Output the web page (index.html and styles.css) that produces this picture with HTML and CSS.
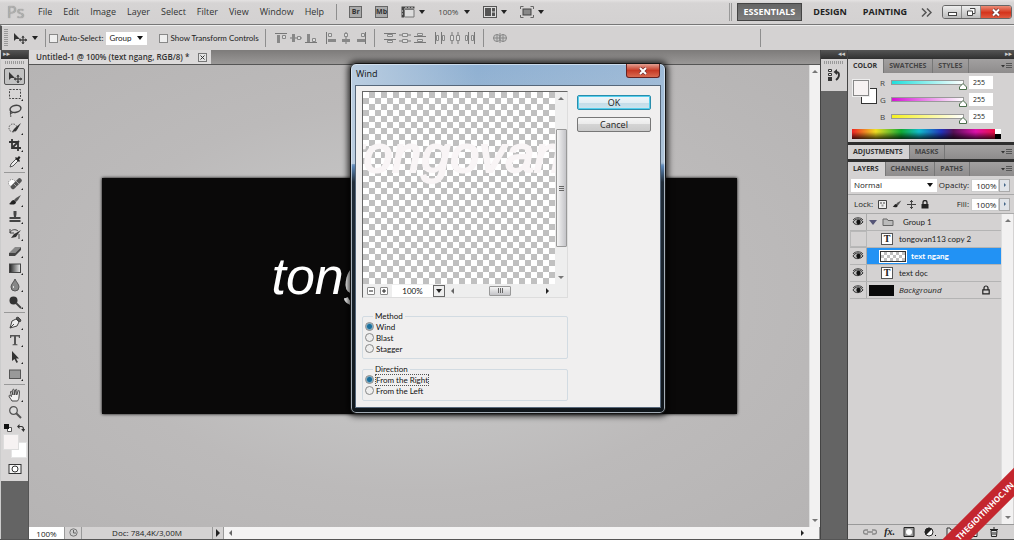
FILE: index.html
```html
<!DOCTYPE html>
<html lang="en">
<head>
<meta charset="utf-8">
<title>Untitled-1 @ 100%</title>
<link rel="stylesheet" href="styles.css">
</head>
<body>
<svg class="defs" aria-hidden="true">
  <symbol id="i-move" viewBox="0 0 16 12"><path d="M2 1v8l2-2h4z" fill="#333"/><path d="M11 4v8M7 8h8" stroke="#444" stroke-width="1.300"/><path d="M9.300 5.800 11 3.600l1.700 2.200zM9.300 10.200 11 12.300l1.700-2.100zM9 6.300 6.800 8 9 9.700zM13 6.300 15.200 8 13 9.700z" fill="#444"/></symbol>
  <symbol id="i-marquee" viewBox="0 0 14 14"><rect x="1.500" y="2.500" width="11" height="9" fill="none" stroke="#444" stroke-dasharray="2 1.300"/></symbol>
  <symbol id="i-lasso" viewBox="0 0 14 14"><ellipse cx="7.500" cy="5" rx="5.500" ry="3.500" fill="none" stroke="#444" stroke-width="1.500" transform="rotate(-12 7 5)"/><path d="M3 7c-2 2 1 3 1.500 2S3 7 2.500 9s1 3 0 4" fill="none" stroke="#444"/></symbol>
  <symbol id="i-quick" viewBox="0 0 14 14"><circle cx="5" cy="7" r="4" fill="none" stroke="#555" stroke-dasharray="1.500 1.200"/><path d="M13 2 8 6 6 8l-2 3 4-1 1.500-2z" fill="#333"/></symbol>
  <symbol id="i-crop" viewBox="0 0 14 14"><path d="M4 1v9h9M1 4h9v9M4 10l7-7" fill="none" stroke="#333" stroke-width="1.800"/></symbol>
  <symbol id="i-dropper" viewBox="0 0 14 14"><path d="m2 12 1-3 5-5 2 2-5 5z" fill="#eee" stroke="#555"/><path d="m7 3 4 4 1-1-1-1.500 1.500-2L11 1 9 3 8 2z" fill="#222"/></symbol>
  <symbol id="i-heal" viewBox="0 0 14 14"><circle cx="4" cy="7" r="3.500" fill="#fff" stroke="#777" stroke-dasharray="1 1"/><path d="m5 11 6.500-6.500" stroke="#555" stroke-width="4.500" stroke-linecap="round"/><path d="m5.500 7.500 3 3M8 5l3 3" stroke="#bbb" stroke-width=".8"/></symbol>
  <symbol id="i-brush" viewBox="0 0 14 14"><path d="m13 2-5 3-2 2 2 2 2-2z" fill="#555"/><path d="M6 7c-3 0-3 3-5 4 3 1 7 1 7-2z" fill="#222"/></symbol>
  <symbol id="i-stamp" viewBox="0 0 14 14"><path d="M5.500 1h3v3l-.5 3h4.500v2h-11V7H6l-.5-3zM1.500 10h11v2h-11z" fill="#444"/></symbol>
  <symbol id="i-history" viewBox="0 0 14 14"><path d="m13 3-5 3-2 1-3 4 5-1 2-3z" fill="#333"/><path d="M2 6c1-4 6-4 8-2M2 2v4h4M11 7v5" fill="none" stroke="#444"/></symbol>
  <symbol id="i-eraser" viewBox="0 0 14 14"><path d="m1 9 6-6h6l-6 6z" fill="#888"/><path d="M1 9h6v3H1zM7 9l6-6v3l-6 6z" fill="#444"/></symbol>
  <symbol id="i-gradient" viewBox="0 0 14 14"><linearGradient id="g1"><stop stop-color="#222"/><stop offset="1" stop-color="#eee"/></linearGradient><rect x="1.500" y="3" width="11" height="8.500" fill="url(#g1)" stroke="#444"/></symbol>
  <symbol id="i-drop" viewBox="0 0 14 14"><path d="M7 1c1 3 4 5 4 8a4 4 0 0 1-8 0c0-3 3-5 4-8z" fill="#888" stroke="#555"/><path d="M5.500 8v2" stroke="#ddd"/></symbol>
  <symbol id="i-dodge" viewBox="0 0 14 14"><circle cx="5.500" cy="5.500" r="4" fill="#333"/><path d="m8 8 5 5" stroke="#444" stroke-width="1.800"/></symbol>
  <symbol id="i-pen" viewBox="0 0 14 14"><path d="m2 12 2-7 4-2 3 3-2 4z" fill="#eee" stroke="#444"/><path d="m2 12 4-4M8 2l2-1 3 3-1 2z" stroke="#444" fill="#555"/></symbol>
  <symbol id="i-type" viewBox="0 0 14 14"><path d="M2 2h10v3h-1l-.5-1.500H8V11l1.500.5v.8h-5v-.8L6 11V3.500H3.500L3 5H2z" fill="#555"/></symbol>
  <symbol id="i-arrow" viewBox="0 0 14 14"><path d="M4 1v10l2.500-2 2 4 1.500-1-2-3.500h3z" fill="#333"/></symbol>
  <symbol id="i-shape" viewBox="0 0 14 14"><rect x="1.500" y="3" width="11" height="8.500" fill="#999" stroke="#555"/></symbol>
  <symbol id="i-hand" viewBox="0 0 14 14"><path d="M4 13C3 11 1 9 1 8s1-1 2.500.5L2.500 4c0-1 1.200-1 1.500 0l1 3-.3-5c0-1 1.300-1 1.500 0L6.700 7 7.500 2c.2-1 1.400-.8 1.400.2L8.700 7l1.500-4c.3-1 1.400-.6 1.300.4L11 9c0 2-1 3-1.500 4z" fill="#f2f2f2" stroke="#444"/></symbol>
  <symbol id="i-zoom" viewBox="0 0 14 14"><circle cx="5.500" cy="5.500" r="3.800" fill="#ddd" stroke="#555" stroke-width="1.300"/><path d="m8 8 5 5" stroke="#555" stroke-width="2"/></symbol>
  <symbol id="i-mask" viewBox="0 0 14 14"><rect x="1" y="2.500" width="12" height="9" fill="#f4f4f4" stroke="#333"/><circle cx="7" cy="7" r="3" fill="#fff" stroke="#333"/></symbol>
  <symbol id="i-swap" viewBox="0 0 8 8"><path d="M1 2.500h3.500q2 0 2 3" fill="none" stroke="#333" stroke-width="1.200"/><path d="M0 2.500 2.500 0v5zM4.200 5h4L6.500 8z" fill="#333"/></symbol>
  <symbol id="i-atop" viewBox="0 0 12 12"><path d="M0 1.500h12" stroke="#777"/><path d="M2 3h3v8H2z" fill="#888"/><path d="M7.500 3.500h3v3h-3z" fill="#ddd" stroke="#888"/></symbol>
  <symbol id="i-amid" viewBox="0 0 12 12"><path d="M0 6h12" stroke="#777"/><path d="M2 2h3v8H2z" fill="#888"/><path d="M7.500 4.500h3v3h-3z" fill="#ddd" stroke="#888"/></symbol>
  <symbol id="i-abot" viewBox="0 0 12 12"><path d="M0 10.500h12" stroke="#777"/><path d="M2 2h3v8H2z" fill="#888"/><path d="M7.500 6.500h3v3h-3z" fill="#ddd" stroke="#888"/></symbol>
  <symbol id="i-dtop" viewBox="0 0 12 12"><path d="M0 1.500h12M0 7.500h12" stroke="#777"/><path d="M3.500 2.500h5v2h-5zM3.500 8.500h5v2h-5z" fill="#ddd" stroke="#888"/></symbol>
  <symbol id="i-dmid" viewBox="0 0 12 12"><path d="M0 3h12M0 9h12" stroke="#777"/><path d="M3.500 1.500h5v3h-5zM3.500 7.500h5v3h-5z" fill="#ddd" stroke="#888"/></symbol>
  <symbol id="i-dbot" viewBox="0 0 12 12"><path d="M0 4.500h12M0 10.500h12" stroke="#777"/><path d="M3.500 1.500h5v2h-5zM3.500 7.500h5v2h-5z" fill="#ddd" stroke="#888"/></symbol>
  <symbol id="i-sphere" viewBox="0 0 14 12"><circle cx="4" cy="6" r="3.500" fill="#ccc" stroke="#888"/><circle cx="10" cy="6" r="3.500" fill="#ccc" stroke="#888"/><path d="M7 1v10M0 6h14M4 2v8M10 2v8" stroke="#888"/></symbol>
  <symbol id="i-eye" viewBox="0 0 12 10"><path d="M1 5c2-4 8-4 10 0-2 3-8 4-10 0z" fill="#bbb" stroke="#333"/><circle cx="6.500" cy="5" r="2.200" fill="#111"/><path d="M1 3c2-3 8-3 10 0" fill="none" stroke="#444"/></symbol>
  <symbol id="i-lock" viewBox="0 0 8 10"><path d="M2 5V3a2 2 0 0 1 4 0v2" fill="none" stroke="#222" stroke-width="1.200"/><path d="M.8 4.800h6.400v4H.8z" fill="none" stroke="#222" stroke-width="1.200"/></symbol>
  <symbol id="i-menu" viewBox="0 0 12 8"><path d="M0 3h4L2 5.500z" fill="#333"/><path d="M5 1.500h6M5 3.500h6M5 5.500h6" stroke="#555"/></symbol>
  <symbol id="i-folder" viewBox="0 0 12 10"><path d="M1 8.500V2h4l1 1.500h5v5z" fill="#bbb" stroke="#666"/></symbol>
</svg>

<div class="app">
  <header class="menubar">
    <span class="logo">Ps</span>
    <nav class="menus">
      <button>File</button><button>Edit</button><button>Image</button><button>Layer</button><button>Select</button><button>Filter</button><button>View</button><button>Window</button><button>Help</button>
    </nav>
    <span class="rule"></span>
    <div class="appbar">
      <button class="badge">Br</button>
      <button class="badge">Mb</button>
      <button class="drop" aria-label="View extras"><svg width="14" height="12" viewBox="0 0 14 12"><path d="M.5.500h13v2H3v9H.5z" fill="#444"/><path d="M3.500 3.500h9.500v7.500H3.500z" fill="#ddd" stroke="#777"/><path d="M5 1v1M8 1v1M11 1v1M1 5h1M1 8h1" stroke="#eee"/></svg><i class="tri"></i></button>
      <button class="drop level">100%<i class="tri"></i></button>
      <button class="drop" aria-label="Arrange documents"><svg width="14" height="12" viewBox="0 0 14 12"><rect x=".5" y=".5" width="13" height="11" fill="#ddd" stroke="#555"/><path d="M2 2h6v8H2zM9 2h3v3.500H9zM9 6.500h3V10H9z" fill="#555"/></svg><i class="tri"></i></button>
      <button class="drop" aria-label="Screen mode"><svg width="14" height="12" viewBox="0 0 14 12"><rect x="3" y="3" width="8" height="6" fill="#888" stroke="#444"/><path d="M.5 3V.5h3M10.500.500h3V3M13.500 9v2.500h-3M3.500 11.500h-3V9" fill="none" stroke="#666"/></svg><i class="tri"></i></button>
    </div>
    <div class="workspaces">
      <button class="ws on">ESSENTIALS</button><button class="ws">DESIGN</button><button class="ws">PAINTING</button>
      <button class="more" aria-label="More workspaces"><svg width="11" height="9" viewBox="0 0 11 9"><path d="m1 .5 4 4-4 4M6 .5l4 4-4 4" fill="none" stroke="#555" stroke-width="1.500"/></svg></button>
    </div>
    <div class="winctl">
      <button aria-label="Minimize"><svg width="11" height="9"><rect x="1.500" y="4.500" width="8" height="3" fill="#fff" stroke="#444"/></svg></button>
      <button aria-label="Restore"><svg width="11" height="10"><path d="M4 1.500h5v5H7M1.500 4h5v4.500h-5z" fill="#fff" stroke="#444"/></svg></button>
      <button class="close" aria-label="Close"><svg width="10" height="9"><path d="m2 1.500 6 6M8 1.500l-6 6" stroke="#633" stroke-width="3.500"/><path d="m2 1.500 6 6M8 1.500l-6 6" stroke="#fff" stroke-width="2"/></svg></button>
    </div>
  </header>

  <div class="options">
    <span class="grip-v"></span>
    <button class="tool-now" aria-label="Move tool"><svg width="16" height="12"><use href="#i-move"/></svg><i class="tri"></i></button>
    <span class="rule"></span>
    <div class="opts">
      <label><input type="checkbox">Auto-Select:</label>
      <span class="pick pick-group"><select aria-label="Auto-select target"><option>Group</option></select></span>
      <label class="transform"><input type="checkbox">Show Transform Controls</label>
    </div>
    <span class="rule"></span>
    <div class="aligns">
      <svg><use href="#i-atop"/></svg><svg><use href="#i-amid"/></svg><svg><use href="#i-abot"/></svg>
    </div>
    <div class="aligns">
      <svg class="turn"><use href="#i-atop"/></svg><svg class="turn"><use href="#i-amid"/></svg><svg class="turn"><use href="#i-abot"/></svg>
    </div>
    <span class="rule"></span>
    <div class="aligns">
      <svg><use href="#i-dtop"/></svg><svg><use href="#i-dmid"/></svg><svg><use href="#i-dbot"/></svg>
    </div>
    <div class="aligns">
      <svg class="turn"><use href="#i-dtop"/></svg><svg class="turn"><use href="#i-dmid"/></svg><svg class="turn"><use href="#i-dbot"/></svg>
    </div>
    <span class="rule"></span>
    <div class="aligns"><svg class="wide"><use href="#i-sphere"/></svg></div>
    <span class="rule rule-end"></span>
  </div>

  <main class="desk">
    <aside class="toolcol">
      <div class="dockhead">▸▸</div>
      <div class="tools">
        <span class="grip-h"></span>
        <button class="t on" aria-label="Move"><svg><use href="#i-move"/></svg></button>
        <button class="t c" aria-label="Marquee"><svg><use href="#i-marquee"/></svg></button>
        <button class="t c" aria-label="Lasso"><svg><use href="#i-lasso"/></svg></button>
        <button class="t c" aria-label="Quick selection"><svg><use href="#i-quick"/></svg></button>
        <button class="t c" aria-label="Crop"><svg><use href="#i-crop"/></svg></button>
        <button class="t c" aria-label="Eyedropper"><svg><use href="#i-dropper"/></svg></button>
        <hr>
        <button class="t c" aria-label="Healing brush"><svg><use href="#i-heal"/></svg></button>
        <button class="t c" aria-label="Brush"><svg><use href="#i-brush"/></svg></button>
        <button class="t c" aria-label="Clone stamp"><svg><use href="#i-stamp"/></svg></button>
        <button class="t c" aria-label="History brush"><svg><use href="#i-history"/></svg></button>
        <button class="t c" aria-label="Eraser"><svg><use href="#i-eraser"/></svg></button>
        <button class="t c" aria-label="Gradient"><svg><use href="#i-gradient"/></svg></button>
        <button class="t c" aria-label="Blur"><svg><use href="#i-drop"/></svg></button>
        <button class="t c" aria-label="Dodge"><svg><use href="#i-dodge"/></svg></button>
        <hr>
        <button class="t c" aria-label="Pen"><svg><use href="#i-pen"/></svg></button>
        <button class="t c" aria-label="Type"><svg><use href="#i-type"/></svg></button>
        <button class="t c" aria-label="Path selection"><svg><use href="#i-arrow"/></svg></button>
        <button class="t c" aria-label="Rectangle"><svg><use href="#i-shape"/></svg></button>
        <hr>
        <button class="t c" aria-label="Hand"><svg><use href="#i-hand"/></svg></button>
        <button class="t" aria-label="Zoom"><svg><use href="#i-zoom"/></svg></button>
        <div class="mini"><svg viewBox="0 0 8 8"><path d="M3.500 3.500h4v4h-4z" fill="#fff" stroke="#555"/><path d="M0 0h5v5H0z" fill="#111"/></svg><svg><use href="#i-swap"/></svg></div>
        <div class="swatches"><span></span><span></span></div>
        <button class="t" aria-label="Quick mask"><svg><use href="#i-mask"/></svg></button>
      </div>
    </aside>

    <section class="doc">
      <div class="tabs"><div class="tab">Untitled-1 @ 100% (text ngang, RGB/8) *<button aria-label="Close document"><svg width="9" height="9"><rect x=".5" y=".5" width="8" height="8" fill="#e4e4e4" stroke="#777"/><path d="m2.500 2.500 4 4M6.500 2.500l-4 4" stroke="#333"/></svg></button></div></div>
      <div class="view">
        <div class="canvas"><div class="art">tongovan113</div></div>
        <div class="vbar"><i class="up"></i><i class="down"></i></div>
      </div>
      <footer class="status">
        <input class="pct" value="100%" aria-label="Zoom level">
        <span class="clock"><svg width="9" height="9"><circle cx="4.500" cy="4.500" r="3.700" fill="#ccc" stroke="#777"/><path d="M4.500 2v3H7" fill="none" stroke="#666"/></svg></span>
        <span class="size">Doc: 784,4K/3,00M</span>
        <button class="play" aria-label="Status options"><i class="right"></i></button>
        <div class="hbar"><i class="left"></i><i class="right"></i></div>
      </footer>
    </section>

    <aside class="dock">
      <div class="dockhead end">◂◂</div>
      <div class="dockbox"><span class="grip-h"></span>
        <svg width="14" height="14" viewBox="0 0 14 14"><path d="M1.500 1.500h3v2h-3zM1.500 5.500h3v2h-3z" fill="#eee" stroke="#333"/><path d="M1 9h4v4H1z" fill="#333"/><path d="M9 4c4 0 4 5 0 8" fill="none" stroke="#333" stroke-width="1.800"/><path d="M6.500 4 10 1v6z" fill="#333"/></svg>
      </div>
    </aside>

    <aside class="panels">
      <div class="dockhead end">▸▸</div>
      <section>
        <div class="ptabs"><button class="on">COLOR</button><button>SWATCHES</button><button>STYLES</button><svg><use href="#i-menu"/></svg></div>
        <div class="color">
          <div class="duo"><span></span><span></span></div>
          <div class="sliders">
            <label class="sl r"><span>R</span><span class="track"><svg viewBox="0 0 8 7"><path d="m4 .5 3.500 3.500v2.500h-7V4z" fill="#fff" stroke="#4c6e4c"/></svg></span><input value="255"></label>
            <label class="sl g"><span>G</span><span class="track"><svg viewBox="0 0 8 7"><path d="m4 .5 3.500 3.500v2.500h-7V4z" fill="#fff" stroke="#4c6e4c"/></svg></span><input value="255"></label>
            <label class="sl b"><span>B</span><span class="track"><svg viewBox="0 0 8 7"><path d="m4 .5 3.500 3.500v2.500h-7V4z" fill="#fff" stroke="#4c6e4c"/></svg></span><input value="255"></label>
          </div>
          <div class="ramp"><span></span></div>
        </div>
      </section>
      <section>
        <div class="ptabs"><button class="on">ADJUSTMENTS</button><button>MASKS</button><svg><use href="#i-menu"/></svg></div>
      </section>
      <section class="layers">
        <div class="ptabs"><button class="on">LAYERS</button><button>CHANNELS</button><button>PATHS</button><svg><use href="#i-menu"/></svg></div>
        <div class="lrow blend">
          <span class="pick"><select aria-label="Blend mode"><option>Normal</option></select></span>
          <label>Opacity:<input value="100%"></label><button class="step" aria-label="Opacity slider"><i class="right"></i></button>
        </div>
        <div class="lrow locks">
          <span>Lock:</span>
          <svg width="9" height="9"><path d="M.5.500h8v8h-8z" fill="#eee" stroke="#444"/><path d="M2 2h2v2H2zM5 2h2v2H5zM3.500 4.500h2v2h-2z" fill="#999"/></svg>
          <svg width="10" height="10" viewBox="0 0 14 14"><use href="#i-brush"/></svg>
          <svg width="9" height="9"><path d="M4.500 0v9M0 4.500h9M3 2l1.500-1.500L6 2M3 7l1.500 1.500L6 7" fill="none" stroke="#444"/></svg>
          <svg width="8" height="9" viewBox="0 0 8 9"><path d="M2 4V2.500a2 2 0 0 1 4 0V4" fill="none" stroke="#222" stroke-width="1.300"/><path d="M.5 4h7v4.500h-7z" fill="#222"/></svg>
          <label class="fill">Fill:<input value="100%"></label><button class="step" aria-label="Fill slider"><i class="right"></i></button>
        </div>
        <div class="stack">
          <ul>
            <li><span class="eye"><svg><use href="#i-eye"/></svg></span><i class="fold"></i><svg class="folder"><use href="#i-folder"/></svg><span class="name">Group 1</span></li>
            <li><span class="eye off"></span><b class="tt">T</b><span class="name">tongovan113 copy 2</span></li>
            <li class="sel"><span class="eye"><svg><use href="#i-eye"/></svg></span><i class="thumb check"></i><span class="name">text ngang</span></li>
            <li><span class="eye"><svg><use href="#i-eye"/></svg></span><b class="tt">T</b><span class="name">text dọc</span></li>
            <li class="bg"><span class="eye"><svg><use href="#i-eye"/></svg></span><i class="thumb black"></i><span class="name">Background</span><svg class="lock"><use href="#i-lock"/></svg></li>
          </ul>
          <div class="vbar"><i class="up"></i><i class="down"></i></div>
        </div>
        <div class="lfoot">
          <svg viewBox="0 0 14 10"><path d="M5 3H2.500a2 2 0 0 0 0 4H5M9 3h2.500a2 2 0 0 1 0 4H9M4 5h6" fill="none" stroke="#888" stroke-width="1.300"/></svg>
          <em>fx.</em>
          <svg viewBox="0 0 14 10"><path d="M2 .5h10v9H2z" fill="#999" stroke="#222"/><circle cx="7" cy="5" r="3" fill="#fff"/></svg>
          <svg viewBox="0 0 14 10"><circle cx="6" cy="5" r="4" fill="#fff" stroke="#222"/><path d="M3 8a4 4 0 0 1 6-6z" fill="#222"/><path d="M12 8h1v1h-1z"/></svg>
          <svg viewBox="0 0 14 10"><path d="M2 9V1h3l1 2h6v6z" fill="#ddd" stroke="#333"/></svg>
          <svg viewBox="0 0 14 10"><path d="M3 .5h8v9H3z" fill="#fff" stroke="#222"/><path d="M3 6h4v4" fill="none" stroke="#222"/></svg>
          <svg viewBox="0 0 14 10"><path d="M4 3.500h6L9.500 9.500h-5zM3 2.500h8M6 1h2M6 5v3M8 5v3" fill="#ddd" stroke="#222"/></svg>
        </div>
      </section>
    </aside>
  </main>

  <div class="dialog" role="dialog" aria-labelledby="dlg-title">
    <div class="dlg-title"><span id="dlg-title">Wind</span><button aria-label="Close dialog"><svg width="10" height="8"><path d="m2 1 6 6M8 1 2 7" stroke="#733" stroke-width="3.500"/><path d="m2 1 6 6M8 1 2 7" stroke="#fff" stroke-width="2"/></svg></button></div>
    <div class="dlg-body">
      <div class="dlg-left">
        <div class="preview">
          <div class="shot check"><span>tongovan113</span></div>
          <div class="pv"><i class="up"></i><span class="knob"></span><i class="down"></i></div>
          <div class="ph">
            <button class="pm" aria-label="Zoom out"><svg width="6" height="6"><path d="M1 3h4" stroke="#222"/></svg></button><button class="pm" aria-label="Zoom in"><svg width="6" height="6"><path d="M1 3h4M3 1v4" stroke="#222"/></svg></button>
            <input value="100%" aria-label="Preview zoom"><button class="pd" aria-label="Zoom presets"><i class="tri"></i></button>
            <i class="left"></i><span class="knob"></span><i class="right"></i>
          </div>
        </div>
        <fieldset>
          <legend>Method</legend>
          <label><input type="radio" name="method" checked><span>Wind</span></label>
          <label><input type="radio" name="method"><span>Blast</span></label>
          <label><input type="radio" name="method"><span>Stagger</span></label>
        </fieldset>
        <fieldset>
          <legend>Direction</legend>
          <label><input type="radio" name="dir" checked><span class="focus">From the Right</span></label>
          <label><input type="radio" name="dir"><span>From the Left</span></label>
        </fieldset>
      </div>
      <div class="dlg-actions"><button class="ok">OK</button><button>Cancel</button></div>
    </div>
  </div>

  <div class="corner"><a href="#">THEGIOITINHOC.VN</a></div>
</div>
</body>
</html>
```
FILE: styles.css
```css
* { box-sizing: border-box; }
body { margin: 0; font: 9px/12px "Open Sans", "Noto Sans", sans-serif; color: #222; background: #d4d2d2; }
button { border: 0; padding: 0; margin: 0; background: none; font: inherit; color: inherit; display: flex; align-items: center; justify-content: center; }
input, select { font: inherit; color: inherit; margin: 0; border: 0; padding: 0; border-radius: 0; min-width: 0; }
svg { display: block; flex: none; }
.defs { position: absolute; width: 0; height: 0; }
.app { position: relative; display: flex; flex-direction: column; height: 100vh; min-height: 540px; overflow: hidden; }

/* triangles */
.tri, .up, .down, .left, .right { display: block; width: 0; height: 0; border: 3px solid transparent; }
.tri { border-width: 4px 3px 0; border-top-color: #222; }
.up { border-width: 0 3px 3px; border-bottom-color: #777; }
.down { border-width: 3px 3px 0; border-top-color: #777; }
.left { border-width: 3px 3px 3px 0; border-right-color: #666; }
.right { border-width: 3px 0 3px 3px; border-left-color: #222; }

/* menu bar */
.menubar { flex: none; height: 25px; display: flex; align-items: center; padding: 0 2px 0 7px; background: linear-gradient(#e4e2e2 0, #d6d4d4 3px, #d3d1d1); border-bottom: 1px solid #777; }
.logo { width: 31px; font-size: 16px; line-height: 20px; color: #b0b0b0; text-shadow: 0 0 1px #777; }
.menus { display: flex; gap: 11px; color: #333; }
.rule { width: 1px; align-self: stretch; margin: 3px 0; background: #8e8e8e; }
.menus + .rule { margin: 4px 12px; }
.appbar { display: flex; align-items: center; gap: 13px; color: #444; }
.badge { width: 13px; height: 12px; border: 1px solid #666; background: #aaa; font-size: 7px; font-weight: 700; color: #333; }
.drop { gap: 4px; }
.level { gap: 6px; font-size: 8px; color: #444; }
.workspaces { margin-left: auto; display: flex; align-items: center; gap: 6px; padding-left: 5px; border-left: 3px double #999; font-weight: 700; color: #222; }
.ws { height: 18px; padding: 0 5px; }
.ws.on { color: #fff; background: linear-gradient(#656565, #7e7e7e); border: 1px solid #444; padding: 0 6px; }
.more { margin-left: 3px; }
.winctl { display: flex; margin-left: 10px; border: 1px solid #666; border-radius: 3px; overflow: hidden; }
.winctl button { width: 19px; height: 12px; background: linear-gradient(#eee, #bbb); border-right: 1px solid #888; }
.winctl .close { width: 30px; background: linear-gradient(#eb8c76, #d4341c 55%, #e05a40); border: 0; }

/* options bar */
.options { flex: none; height: 25px; display: flex; align-items: center; padding: 0 4px 0 2px; background: #d4d2d2; border-top: 1px solid #eee; border-left: 2px solid #555; font: 8px/12px Lato, "Open Sans", sans-serif; }
.grip-v { width: 4px; height: 18px; background: repeating-linear-gradient(#999 0 1px, transparent 1px 2px); }
.tool-now { gap: 4px; margin: 0 7px 0 4px; }
.opts { display: flex; align-items: center; margin: 0 6px 0 3px; }
.opts label { display: flex; align-items: center; gap: 2px; white-space: nowrap; }
.opts input { appearance: none; width: 9px; height: 9px; border: 1px solid #888; background: #eee; }
.transform { margin-left: 12px; }
.pick { display: flex; align-items: center; position: relative; background: #fff; }
.pick::after { content: ""; position: absolute; right: 4px; border: 3px solid transparent; border-width: 4px 3px 0; border-top-color: #111; }
.pick select { appearance: none; width: 100%; height: 13px; padding-left: 3px; background: none; line-height: 12px; }
.pick-group { width: 41px; margin-left: 3px; }
.aligns { display: flex; gap: 3px; margin: 0 4px 0 3px; }
.aligns svg { width: 12px; height: 12px; }
.rule + .aligns { margin-left: 9px; }
.turn { transform: rotate(-90deg); }
.aligns .wide { width: 14px; }
.rule-end { margin-left: auto; margin-right: 249px; }
.aligns + .aligns { margin: 0 7px 0 4px; }

/* work area */
.desk { flex: 1; min-height: 0; display: grid; grid-template-columns: 29px 1fr 28px 166px; background: #646464; border-bottom: 1px solid #555; }
.dockhead { height: 9px; background: linear-gradient(#555, #303030); color: #ccc; font: 7px/9px "DejaVu Sans", sans-serif; padding: 0 2px; }
.dockhead.end { text-align: right; }
.toolcol { border-left: 1px solid #ccc; border-right: 1px solid #555; background: #646464; }
.tools { display: flex; flex-direction: column; align-items: center; background: #d8d6d6; padding: 2px 0 4px; }
.grip-h { width: 20px; height: 3px; margin-bottom: 4px; background: repeating-linear-gradient(90deg, #999 0 1px, transparent 1px 2px); }
.t { position: relative; width: 21px; height: 17px; }
.t svg { width: 14px; height: 14px; }
.t.on { border: 1px solid #555; border-radius: 2px; background: #c2c2c2; }
.t.on svg { width: 16px; height: 12px; }
.t.c::after { content: ""; position: absolute; right: 2px; bottom: 1px; border: 1px solid #222; border-left-color: transparent; border-top-color: transparent; }
.tools hr { width: 21px; height: 1px; margin: 2px 0 1px; border: 0; background: #999; }
.mini { display: flex; gap: 5px; margin: 4px 0 2px; }
.mini svg { width: 8px; height: 8px; }
.swatches { width: 24px; height: 24px; margin-bottom: 2px; display: grid; grid-template: repeat(3, 8px) / repeat(3, 8px); }
.swatches span { background: #fff; grid-area: 2 / 2 / 4 / 4; border: 1px solid #e4e4e4; }
.swatches span:first-child { z-index: 1; grid-area: 1 / 1 / 3 / 3; background: #f6f2f2; border: 1px solid #ddd; }

.doc { display: flex; flex-direction: column; min-width: 0; min-height: 0; }
.tabs { height: 15px; display: flex; background: linear-gradient(#7d7b7a, #9a9897); border-bottom: 1px solid #555; }
.tab { display: flex; align-items: center; gap: 9px; padding: 0 4px 0 7px; background: #dcdada; font-weight: 600; font-size: 8px; color: #333; white-space: nowrap; }
.view { flex: 1; min-height: 0; display: flex; }
.canvas { flex: 1; display: flex; align-items: center; justify-content: center; background: radial-gradient(ellipse at center, #c8c8c8 20%, #bcbaba 60%, #b6b4b4); }
.art { width: 635px; height: 236px; padding: 0 0 40px 170px; display: flex; align-items: center; background: #0a0909; box-shadow: 0 0 3px #000; color: #fff; font: italic 52px/60px "Liberation Sans", Arial, sans-serif; }
.vbar { width: 11px; display: flex; flex-direction: column; justify-content: space-between; align-items: center; padding: 5px 0; background: #f2f1f1; border-left: 1px solid #ddd; }
.status { height: 12px; display: flex; background: #d4d2d2; font-size: 8px; line-height: 11px; }
.status > * { border-right: 1px solid #999; }
.pct { width: 36px; text-align: center; background: #fff; }
.clock { width: 17px; padding: 1px 4px; }
.size { width: 131px; text-align: center; }
.play { width: 11px; }
.play .right { border-width: 4px 0 4px 4px; }
.hbar { flex: 1; display: flex; align-items: center; justify-content: space-between; padding: 0 15px 0 5px; background: #f4f3f3; }

.dock { border-left: 1px solid #444; border-right: 1px solid #444; }
.dockbox { height: 32px; padding-top: 2px; display: flex; flex-direction: column; align-items: center; background: #d4d2d2; }

/* panels */
.panels { display: flex; flex-direction: column; min-height: 0; background: #2e2e2e; }
.panels section { flex: none; margin-bottom: 3px; background: #d4d2d2; }
.ptabs { display: flex; height: 14px; background: linear-gradient(#a2a0a0, #8e8c8c); font-weight: 700; font-size: 7px; color: #444; }
.ptabs button { padding: 0 6px 0 5px; border-right: 1px solid #777; }
.ptabs .on { background: #d4d2d2; color: #333; }
.ptabs svg { width: 12px; height: 8px; margin: 3px 1px 0 auto; }
.color { display: grid; grid-template-columns: 27px 1fr; padding: 3px 21px 3px 5px; row-gap: 6px; }
.duo { margin-top: 4px; display: grid; grid-template: repeat(3, 8px) / repeat(3, 8px); }
.duo span { background: #fff; border: 1px solid #333; grid-area: 2 / 2 / 4 / 4; }
.duo span:first-child { z-index: 1; background: #f6f2f2; border-color: #888; outline: 1px solid #eee; grid-area: 1 / 1 / 3 / 3; }
.sliders { display: flex; flex-direction: column; gap: 4px; font-size: 8px; }
.sl { display: flex; align-items: center; gap: 5px; }
.sl > span:first-child { width: 6px; color: #444; }
.sl input { width: 24px; height: 13px; padding-left: 4px; background: #fff; font-size: 7px; }
.track { flex: 1; height: 5px; display: flex; justify-content: flex-end; border: 1px solid #999; background: linear-gradient(90deg, #1fdedb, #fff); }
.g .track { background: linear-gradient(90deg, #d414d4, #fff); }
.b .track { background: linear-gradient(90deg, #f5f01e, #fff); }
.track svg { width: 8px; height: 7px; margin: 2px -4px 0 0; }
.ramp { grid-column: 1 / 3; height: 10px; margin: 0 -8px 0 -1px; display: flex; justify-content: flex-end; background: linear-gradient(transparent 30%, rgba(0,0,0,.75)), linear-gradient(90deg, #e22 0, #ed2 16%, #1a3 33%, #1bc 45%, #23b 60%, #515 68%, #d1a 83%, #e12); }
.ramp span { width: 6px; background: linear-gradient(#fff 50%, #000 50%); }
.panels .layers { flex: 1; min-height: 0; margin: 0; display: flex; flex-direction: column; font-size: 8px; }
.lrow { height: 19px; display: flex; align-items: center; padding: 0 4px 0 3px; border-bottom: 1px solid #aaa; }
.blend .pick { width: 88px; margin-right: 2px; }
.lrow label { display: flex; align-items: center; gap: 2px; margin-left: auto; }
.lrow input { width: 28px; height: 13px; padding-left: 4px; background: #fff; border: 1px solid #ccc; }
.step { width: 11px; height: 13px; border: 1px solid #aaa; background: #e0e4e8; }
.step .right { border-width: 2px 0 2px 2px; border-left-color: #468; }
.locks { gap: 5px; padding-left: 6px; }
.locks .step { margin-left: -5px; }
.stack { flex: 1; min-height: 0; display: flex; }
.stack ul { flex: 1; list-style: none; margin: 0 0 0 2px; padding: 0; min-width: 0; }
.stack li { display: flex; align-items: center; height: 17px; border-bottom: 1px solid #b4b4b4; }
.eye { width: 17px; height: 100%; padding: 3px 2px; border-right: 1px solid #aaa; background: #d4d2d2; }
.eye svg { width: 12px; height: 10px; }
.eye.off { border: 1px solid #b8b8b8; }
.fold { margin: 0 5px 0 2px; border: 4px solid transparent; border-width: 5px 4px 0; border-top-color: #557; }
.folder { width: 12px; height: 10px; }
.folder + .name { margin-left: 9px; }
.tt { width: 12px; height: 12px; margin: 0 6px 0 14px; border: 1px solid #555; background: #fff; font: 700 10px/10px "Liberation Serif", serif; text-align: center; }
.name { font-family: Lato, "Open Sans", sans-serif; white-space: nowrap; }
.sel { background: #2292f4; color: #fff; font-weight: 700; }
.thumb { height: 11px; width: 25px; }
.sel .thumb { width: 26px; margin: 0 5px 0 13px; border: 1px solid #333; outline: 1px solid #fff; background-size: 6px 6px; }
.black { margin: 0 5px 0 2px; background: #0a0a0a; }
.bg { font-style: italic; }
.bg .name { font-family: "Open Sans", sans-serif; }
.lock { width: 8px; height: 10px; margin: 0 11px 0 auto; }
.layers .vbar { width: 12px; margin-right: 1px; }
.lfoot { height: 15px; display: flex; align-items: center; justify-content: space-between; padding: 0 13px 0 15px; border-top: 1px solid #999; font: 700 10px/12px "Liberation Serif", serif; }
.lfoot svg { width: 14px; height: 10px; }

/* filter dialog */
.check { background: repeating-conic-gradient(#c0c0c0 0 25%, #fff 0 50%) 0 0 / 12px 12px; }
.dialog { position: absolute; left: 350px; top: 63px; width: 316px; padding: 0 4px 5px; border: 1px solid #151515; border-radius: 6px; background: linear-gradient(90deg, rgba(190,208,226,.9), rgba(120,158,200,0) 40%, rgba(190,208,226,.3)) 0 0 / 100% 100px no-repeat, linear-gradient(#8fb0d2, #a8bfd4 98px, #5c87b8 102px, #202c38 118px, #10161b); box-shadow: inset 0 0 0 1px rgba(225,235,245,.7), 0 0 6px 2px rgba(0,0,0,.8); }
.dlg-title { height: 21px; display: flex; align-items: flex-start; justify-content: space-between; padding: 0 1px; color: #111; }
.dlg-title span { padding-top: 4px; }
.dlg-title button { width: 34px; height: 14px; border: 1px solid #622; border-top: 0; border-radius: 0 0 3px 3px; background: linear-gradient(#e2a092, #c63a25 50%, #d96a50); }
.dlg-body { display: flex; justify-content: space-between; padding: 5px 9px 6px 6px; border: 1px solid #56677a; background: #f0efef; }
.dlg-left { width: 206px; display: flex; flex-direction: column; gap: 6px; font: 8px/11px Lato, "Open Sans", sans-serif; color: #111; }
.preview { display: grid; grid-template: 192px 13px / 1fr 12px; border: 1px solid #ddd; border-top-color: #666; border-left-color: #666; margin-bottom: 8px; }
.shot { overflow: hidden; display: flex; align-items: flex-start; padding-top: 32px; }
.shot span { margin-left: -14px; color: #f9f5f6; font: italic 52px/60px "Liberation Sans", Arial, sans-serif; -webkit-text-stroke: 2px #f9f5f6; }
.pv { grid-row: 1; grid-column: 2; display: flex; flex-direction: column; align-items: center; justify-content: space-between; padding: 5px 0; background: #eee; }
.knob { border: 1px solid #999; border-radius: 1px; background: linear-gradient(90deg, #f4f4f4, #c4c4c8); display: flex; align-items: center; justify-content: center; }
.knob::after { content: ""; width: 5px; height: 5px; background: repeating-linear-gradient(#666 0 1px, transparent 1px 2px); }
.pv .knob { width: 11px; height: 118px; }
.ph { grid-column: 1 / 3; display: flex; align-items: center; padding: 0 18px 0 4px; background: #eee; }
.pm { width: 8px; height: 8px; margin-right: 5px; border: 1px solid #888; border-radius: 1px; background: #fff; }
.ph input { width: 41px; height: 12px; background: #fff; text-align: center; margin-left: -1px; }
.pd { width: 12px; height: 12px; border: 1px solid #666; background: #eee; margin-right: 6px; }
.ph .knob { width: 22px; height: 10px; margin: 0 auto; background: linear-gradient(#f4f4f4, #c4c4c8); }
.ph .knob::after { background: repeating-linear-gradient(90deg, #666 0 1px, transparent 1px 2px); }
fieldset { margin: 0; padding: 1px 2px 4px; border: 1px solid #d2dbe2; border-radius: 2px; min-width: 0; }
legend { padding: 0 2px; margin-left: 8px; height: 8px; line-height: 8px; }
fieldset label { display: flex; align-items: center; gap: 2px; height: 11px; }
fieldset label span { line-height: 10px; }
fieldset input { appearance: none; width: 9px; height: 9px; border: 1px solid #888; border-radius: 50%; background: #eee; }
fieldset input:checked { background: radial-gradient(circle, #1b6f9c 2px, #dce8ee 4px); }
.focus { outline: 1px dotted #555; }
.dlg-actions { width: 74px; padding-top: 4px; display: flex; flex-direction: column; gap: 7px; }
.dlg-actions button { height: 15px; border: 1px solid #777; border-radius: 2px; background: linear-gradient(#f4f4f4, #eaeaea 50%, #d4d4d4 50%, #cacaca); }
.dlg-actions .ok { border-color: #2a8dab; box-shadow: inset 0 0 0 1px #54cfee; background: linear-gradient(#eef6fa, #e2eef4 50%, #c2dce8 50%, #cde4ee); }

/* corner ribbon */
.corner { position: absolute; right: 0; bottom: 0; width: 100px; height: 100px; overflow: hidden; pointer-events: none; }
.corner a { position: absolute; right: -51px; bottom: 19px; width: 160px; text-align: center; transform: rotate(-45deg); background: #c4262e; color: #fff; font: 700 8px/20px "Open Sans", sans-serif; text-decoration: none; }
```
